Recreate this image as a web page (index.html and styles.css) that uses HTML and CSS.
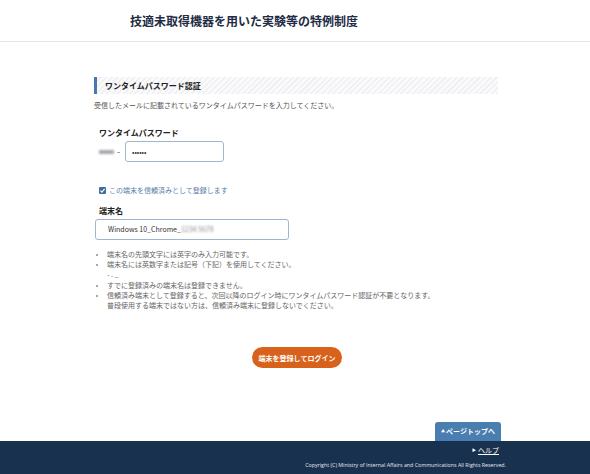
FILE: index.html
```html
<!DOCTYPE html>
<html lang="ja">
<head>
  <meta charset="UTF-8">
  <meta name="viewport" content="width=device-width, initial-scale=1.0">
  <title>ワンタイムパスワード認証 - 技適未取得機器を用いた実験等の特例制度</title>
  <link rel="stylesheet" href="styles.css">
</head>
<body>
  <header class="site-header">
    <h1 class="site-title">技適未取得機器を用いた実験等の特例制度</h1>
  </header>

  <main class="content">
    <h2 class="section-title">ワンタイムパスワード認証</h2>
    <p class="lead">受信したメールに記載されているワンタイムパスワードを入力してください。</p>

    <form class="otp-form">
      <div class="field">
        <label class="field-label" for="otp">ワンタイムパスワード</label>
        <div class="otp-row">
          <span class="otp-prefix"><span class="masked-box"></span><span class="dash">-</span></span>
          <input class="text-input otp-input" type="password" id="otp" value="123456">
        </div>
      </div>

      <label class="trust-check">
        <span class="check-box">
          <svg viewBox="0 0 10 10" width="7" height="7"><path d="M2 5.2 L4.2 7.3 L8 2.8" fill="none" stroke="#fff" stroke-width="1.6"/></svg>
        </span>
        この端末を信頼済みとして登録します
      </label>

      <div class="field">
        <label class="field-label" for="device">端末名</label>
        <div class="text-input device-input" id="device">Windows 10_Chrome_<span class="masked">1234 5678</span></div>
      </div>

      <ul class="notes">
        <li>端末名の先頭文字には英字のみ入力可能です。</li>
        <li>端末名には英数字または記号（下記）を使用してください。</li>
        <li class="plain">- . _</li>
        <li>すでに登録済みの端末名は登録できません。</li>
        <li>信頼済み端末として登録すると、次回以降のログイン時にワンタイムパスワード認証が不要となります。<br>普段使用する端末ではない方は、信頼済み端末に登録しないでください。</li>
      </ul>

      <div class="actions">
        <button type="submit" class="submit-btn">端末を登録してログイン</button>
      </div>
    </form>
  </main>

  <div class="pagetop-wrap">
    <a class="pagetop" href="#"><span class="tri">▲</span>ページトップへ</a>
  </div>
  <footer class="site-footer">
    <div class="footer-inner">
      <a class="help-link" href="#"><span class="arrow">▶</span><span class="help-text">ヘルプ</span></a>
      <p class="copyright">Copyright (C) Ministry of Internal Affairs and Communications All Rights Reserved.</p>
    </div>
  </footer>
</body>
</html>
```

FILE: styles.css
```css
/* 全体 */
body {
  margin: 0;
  font-family: "Noto Sans CJK JP", "Noto Sans", sans-serif;
  color: #333;
  background-color: #fff;
}

/* ヘッダー */
.site-header {
  height: 42px;
  border-bottom: 1px solid #e6e6e6;
  display: flex;
  align-items: center;
  padding-left: 130px;
  box-sizing: border-box;
}

.site-title {
  margin: 0;
  font-size: 12px;
  font-weight: 700;
  color: #1e2c44;
}

/* メインコンテンツ */
.content {
  width: 404px;
  margin: 35px 0 0 94px;
}

.section-title {
  margin: 0;
  height: 17px;
  line-height: 17px;
  padding-left: 8px;
  font-size: 8px;
  font-weight: 700;
  color: #222;
  border-left: 3px solid #4a78ad;
  background: repeating-linear-gradient(-45deg, #eef0f3 0 1.5px, #fafafa 1.5px 4px);
}

.lead {
  margin: 5px 0 0;
  font-size: 7px;
  line-height: 12px;
  color: #555;
}

.otp-form {
  padding: 0 4px;
}

.field {
  margin-top: 16px;
}

.field-label {
  display: block;
  font-size: 8px;
  font-weight: 700;
  color: #222;
  line-height: 12px;
  margin-left: 1px;
}

.otp-row {
  display: flex;
  align-items: center;
  margin-top: 2px;
}

.otp-prefix {
  display: flex;
  align-items: center;
  width: 26px;
  margin-left: 1px;
}

.masked-box {
  width: 15px;
  height: 4px;
  background-color: #a5a8ad;
  filter: blur(0.9px);
}

.dash {
  font-size: 9px;
  color: #555;
  margin-left: 3px;
}

.masked {
  filter: blur(1.3px);
  color: #888;
}

.text-input {
  box-sizing: border-box;
  border: 1px solid #9fb6d2;
  border-radius: 3px;
  background: #fff;
  font-family: inherit;
  font-size: 7px;
  color: #333;
  outline: none;
}

.otp-input {
  width: 99px;
  height: 21px;
  padding: 0 6px;
}

.trust-check {
  display: flex;
  align-items: center;
  gap: 3px;
  margin-top: 23px;
  margin-left: 1px;
  font-size: 7px;
  color: #5a7fa8;
}

.check-box {
  width: 7px;
  height: 7px;
  background-color: #3f6e9f;
  border-radius: 1px;
  display: flex;
  align-items: center;
  justify-content: center;
}

.trust-check + .field {
  margin-top: 10px;
}

.device-input {
  width: 194px;
  height: 21px;
  line-height: 19px;
  padding: 0 12px;
  margin: 2px 0 0 -3px;
}

/* 注意事項 */
.notes {
  margin: 9px 0 0;
  padding-left: 9px;
  font-size: 7px;
  line-height: 10.2px;
  color: #666;
}

.notes li::marker {
  color: #8a8a8a;
  font-size: 6px;
}

.notes li.plain {
  list-style: none;
}

.actions {
  display: flex;
  justify-content: center;
  margin-top: 37px;
}

.submit-btn {
  width: 90px;
  height: 21px;
  border: none;
  border-radius: 11px;
  background-color: #d8621c;
  color: #fff;
  font-family: inherit;
  font-size: 7px;
  font-weight: 700;
  cursor: pointer;
  margin-left: 2px;
}

/* ページトップ */
.pagetop-wrap {
  display: flex;
  justify-content: flex-end;
  padding-right: 89px;
  margin-top: 54px;
}

.pagetop {
  display: block;
  width: 66px;
  height: 19px;
  line-height: 19px;
  text-align: center;
  background-color: #4a7db0;
  color: #fff;
  font-size: 7px;
  font-weight: 700;
  text-decoration: none;
  border-radius: 3px 3px 0 0;
}

.pagetop .tri {
  font-size: 4px;
  margin-right: 1px;
  vertical-align: 1px;
}

/* フッター */
.site-footer {
  background-color: #18314e;
  height: 33px;
}

.footer-inner {
  width: 400px;
  margin-left: 106px;
  text-align: right;
  padding-top: 3px;
  font-size: 7px;
  line-height: 12px;
}

.help-link {
  display: inline-block;
  color: #fff;
  font-size: 7px;
  text-decoration: none;
  line-height: 12px;
  margin-right: 7px;
}

.help-link .arrow {
  font-size: 4px;
  margin-right: 2px;
  vertical-align: 1px;
}

.help-text {
  text-decoration: underline;
}

.copyright {
  margin: 5px 0 0;
  font-family: "Open Sans", sans-serif;
  font-size: 5.3px;
  color: #e6e9ee;
  line-height: 8px;
}
```
